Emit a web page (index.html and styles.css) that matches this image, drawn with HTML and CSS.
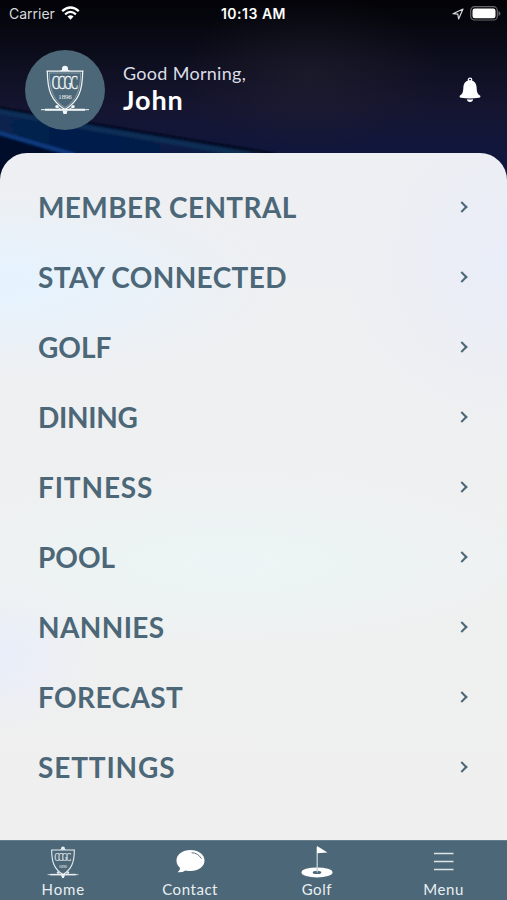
FILE: index.html
```html
<!DOCTYPE html>
<html lang="en">
<head>
<meta charset="utf-8">
<title>Member Menu</title>
<link rel="stylesheet" href="styles.css">
</head>
<body>
<div class="app">
  <svg class="backdrop" viewBox="0 0 507 190" aria-hidden="true">
    <defs>
      <linearGradient id="band" x1="0" y1="0" x2="1" y2="0">
        <stop offset="0" stop-color="#07244e"/><stop offset=".45" stop-color="#051a4b"/><stop offset="1" stop-color="#0b1c3f"/>
      </linearGradient>
      <filter id="soft"><feGaussianBlur stdDeviation=".8"/></filter>
    </defs>
    <g filter="url(#soft)">
      <path fill="url(#band)" d="M-4 107L90 123.500L190 140L265 153V190H-4z"/>
      <path fill="none" stroke="#12345a" stroke-width="5" opacity=".75" d="M-4 111L90 128L190 145L250 155"/>
      <path fill="none" stroke="#030716" stroke-width="2" d="M-4 107L90 123.500L190 140L275 154"/>
      <path fill="#030b29" d="M-4 134L75 157V190H-4z"/>
      <path fill="none" stroke="#0b3b80" stroke-width="4" d="M-4 132L75 155"/>
    </g>
  </svg>
  <div class="status">
    <div class="carrier"><span>Carrier</span>
      <svg width="19" height="15" viewBox="0 0 19 15"><g fill="none" stroke="#fff" stroke-width="2.300"><path d="M1.200 5.200Q9.500-2.300 17.800 5.200"/><path d="M4.100 8.300Q9.500 3.500 14.900 8.300"/></g><path fill="#fff" d="M6.500 10.600Q9.500 8 12.500 10.600L9.500 13.800z"/></svg>
    </div>
    <div class="clock">10:13 AM</div>
    <div class="power">
      <svg width="12" height="12" viewBox="0 0 12 12"><path fill="none" stroke="#d8d8da" stroke-width="1.200" stroke-linejoin="round" d="M1 5.700L11 1L6.600 11L5.800 6.200z"/></svg>
      <svg width="31" height="15" viewBox="0 0 31 15"><rect x=".7" y=".7" width="26.600" height="13.300" rx="3.800" fill="none" stroke="#67676b" stroke-width="1.200"/><rect x="2.500" y="2.600" width="23" height="9.600" rx="2.200" fill="#fff"/><path fill="#67676b" d="M28.500 5v5q2-1 2-2.500t-2-2.500z"/></svg>
    </div>
  </div>
  <header class="profile">
    <div class="avatar">
      <svg width="50" height="50" viewBox="0 0 50 50">
        <g fill="none" stroke="currentColor">
          <path stroke-width="1.200" d="M6.500 6.200H43.500M7.300 6.500C7.500 25 11 36 25 44.500C39 36 42.500 25 42.700 6.500"/>
          <path stroke-width=".6" opacity=".6" d="M9 8H41M9.300 8C9.500 24 13 35 25 42.500C37 35 40.500 24 40.700 8"/>
          <path stroke-width="2" d="M5 44.700H45"/>
          <path stroke-width="1" d="M1 44.700H49M16 41L21 44.500M34 41L29 44.500"/>
        </g>
        <g fill="currentColor">
          <path d="M20.500 6V5H22V3.500a3 2.800 0 0 1 6 0V5h1.500V6z"/>
          <circle cx="17" cy="41.600" r="1.700"/><circle cx="33" cy="41.600" r="1.700"/>
          <path d="M22.500 45.500h5l-1 3.500h-3z"/>
          <text class="crest-mono" transform="translate(11.800 24) scale(.62 1)" textLength="42">CCGC</text>
          <text class="crest-year" x="18.300" y="34" textLength="13.500">1896</text>
        </g>
      </svg>
    </div>
    <div class="greeting"><div class="hello">Good Morning,</div><div class="name">John</div></div>
    <svg class="bell" width="22" height="26" viewBox="0 0 22 26"><g fill="#fff"><path d="M11 3.200C6.800 3.200 4.700 6.200 4.400 10C4.200 15 3.600 17 1 18.500Q-.2 20.500 2.200 20.800Q11 22.400 19.800 20.800Q22.200 20.500 21 18.500C18.400 17 17.800 15 17.600 10C17.300 6.200 15.200 3.200 11 3.200z"/><path d="M7.900 22.300Q11 22.800 14.100 22.300Q13.800 25 11 25T7.900 22.300z"/></g><circle cx="11" cy="2.800" r="1.700" fill="none" stroke="#fff" stroke-width="1.300"/></svg>
  </header>
  <main class="sheet">
    <a class="row"><span class="wide">MEMBER CENTRAL</span><i class="chev"></i></a>
    <a class="row"><span class="wide">STAY CONNECTED</span><i class="chev"></i></a>
    <a class="row"><span>GOLF</span><i class="chev"></i></a>
    <a class="row"><span class="tight">DINING</span><i class="chev"></i></a>
    <a class="row"><span class="wider">FITNESS</span><i class="chev"></i></a>
    <a class="row"><span>POOL</span><i class="chev"></i></a>
    <a class="row"><span class="wide">NANNIES</span><i class="chev"></i></a>
    <a class="row"><span class="wide">FORECAST</span><i class="chev"></i></a>
    <a class="row"><span class="wider">SETTINGS</span><i class="chev"></i></a>
  </main>
  <nav class="tabs">
    <a class="tab">
      <svg width="32" height="34" viewBox="0 -1 50 52">
        <g fill="none" stroke="currentColor">
          <path stroke-width="1.700" d="M6.500 6.200H43.500M7.300 6.500C7.500 25 11 36 25 44.500C39 36 42.500 25 42.700 6.500"/>
          <path stroke-width="2.400" d="M5 44.700H45"/>
          <path stroke-width="1.200" d="M1 44.700H49M16 41L21 44.500M34 41L29 44.500"/>
        </g>
        <g fill="currentColor">
          <path d="M20.500 6V5H22V3.500a3 2.800 0 0 1 6 0V5h1.500V6z"/>
          <circle cx="17" cy="41.600" r="1.700"/><circle cx="33" cy="41.600" r="1.700"/>
          <path d="M22 45.500h6l-1.500 4.500h-3z"/>
          <text class="crest-mono" transform="translate(11.800 24) scale(.62 1)" textLength="42">CCGC</text>
          <text class="crest-year" x="18.300" y="34" textLength="13.500">1896</text>
        </g>
      </svg><span class="home">Home</span></a>
    <a class="tab"><svg width="32" height="34" viewBox="0 0 32 34"><path fill="#fff" d="M16.500 5C8.500 5 2.500 9.600 2.500 15.500Q2.500 20 6 22.700Q6.500 25 3.600 27.200Q8.500 27.500 11.500 25.400Q14 26 16.500 26C24.500 26 30.500 21.500 30.500 15.500S24.500 5 16.500 5z"/><path fill="none" stroke="#4c6777" stroke-width=".9" stroke-linecap="round" d="M18 7.700Q24 8 27.300 13.300"/></svg><span>Contact</span></a>
    <a class="tab"><svg width="32" height="34" viewBox="0 0 32 34"><ellipse cx="16" cy="27.400" rx="15.500" ry="5" fill="#fff"/><ellipse cx="16" cy="27.400" rx="4.300" ry="1.700" fill="#4c6777"/><path stroke="#c5d0d7" stroke-width="1.300" d="M16.200 2V27.400"/><path fill="#fff" d="M16 1L26.500 7.500L16 8.300z"/></svg><span>Golf</span></a>
    <a class="tab"><svg width="32" height="34" viewBox="0 0 32 34"><path stroke="#dde4e8" stroke-width="1.500" d="M6 8.600h19.500M6 16.500h19.500M6 24.400h19.500"/></svg><span>Menu</span></a>
  </nav>
</div>
</body>
</html>
```
FILE: styles.css
```css
* { box-sizing: border-box; }
body { margin: 0; font-family: Lato, sans-serif; }
.app {
  position: relative; isolation: isolate; width: 507px; height: 900px; overflow: hidden;
  display: flex; flex-direction: column;
  background:
    radial-gradient(ellipse 130px 80px at 310px 75px, rgba(40,36,50,.45), transparent),
    linear-gradient(180deg, #030308 0, #06070f 25px, #0e0f20 65px, #151531 110px, #10163c 150px, #10163c 180px);
}
.backdrop { position: absolute; z-index: -1; top: 0; left: 0; width: 507px; height: 190px; }
.status {
  display: grid; grid-template-columns: 1fr auto 1fr; align-items: center;
  height: 27px; padding: 0 6px 0 9px; color: #fff;
  font-family: Inter, sans-serif; font-size: 14px;
}
.carrier { display: flex; align-items: center; gap: 6px; color: #d9d9dc; }
.clock { margin-right: 3px; font-weight: 600; font-size: 14px; letter-spacing: .5px; }
.power { display: flex; align-items: center; justify-content: flex-end; gap: 6px; }
.profile { display: flex; align-items: center; height: 126px; padding: 0 26px 0 25px; }
.avatar {
  display: flex; align-items: center; justify-content: center;
  width: 80px; height: 80px; border-radius: 50%; background: #4c6777; color: #f2f6f8;
}
.crest-mono { font: 18px "Liberation Serif", serif; stroke: currentColor; stroke-width: .3px; }
.crest-year { font: 7px "Liberation Serif", serif; }
.greeting { flex: 1; margin: -5px 0 0 18px; color: #fff; }
.hello { font-size: 18px; line-height: 24px; letter-spacing: .3px; color: #dcdde5; }
.name { font-size: 27px; line-height: 29px; font-weight: 700; letter-spacing: .9px; }
.bell { margin-top: -1px; }
.sheet {
  flex: 1; padding: 19px 38px 0; border-radius: 27px 27px 0 0;
  background:
    radial-gradient(ellipse 290px 100px at 0 130px, #e5f3ff, rgba(229,243,255,0)),
    radial-gradient(ellipse 160px 170px at 507px 110px, #e9edf8, rgba(233,237,248,0)),
    radial-gradient(ellipse 360px 100px at 230px 410px, #ecf5f5, rgba(236,245,245,0)),
    radial-gradient(ellipse 100px 80px at 0 500px, #e9eefb, rgba(233,238,251,0)),
    linear-gradient(180deg, #eeeff2, #eff0f0 60%, #efefef);
}
.row {
  display: flex; align-items: center; justify-content: space-between; height: 70px;
  color: #4c6777; font-size: 28px; font-weight: 700; white-space: nowrap;
}
.wide { letter-spacing: .38px; }
.wider { letter-spacing: .85px; }
.tight { letter-spacing: -.3px; }
.chev { width: 8px; height: 8px; margin-right: 3px; border: solid #4c6777; border-width: 2px 2px 0 0; transform: rotate(45deg); }
.tabs {
  display: grid; grid-template-columns: repeat(4, 1fr); height: 60px;
  background: #4c6777; border-top: 1px solid #657e8c; color: #e9eff3;
}
.tab { display: flex; flex-direction: column; align-items: center; padding-top: 4px; font-size: 15px; line-height: 20px; letter-spacing: .55px; }
.tab .home { letter-spacing: .9px; }
.tab svg { flex: none; }
```
